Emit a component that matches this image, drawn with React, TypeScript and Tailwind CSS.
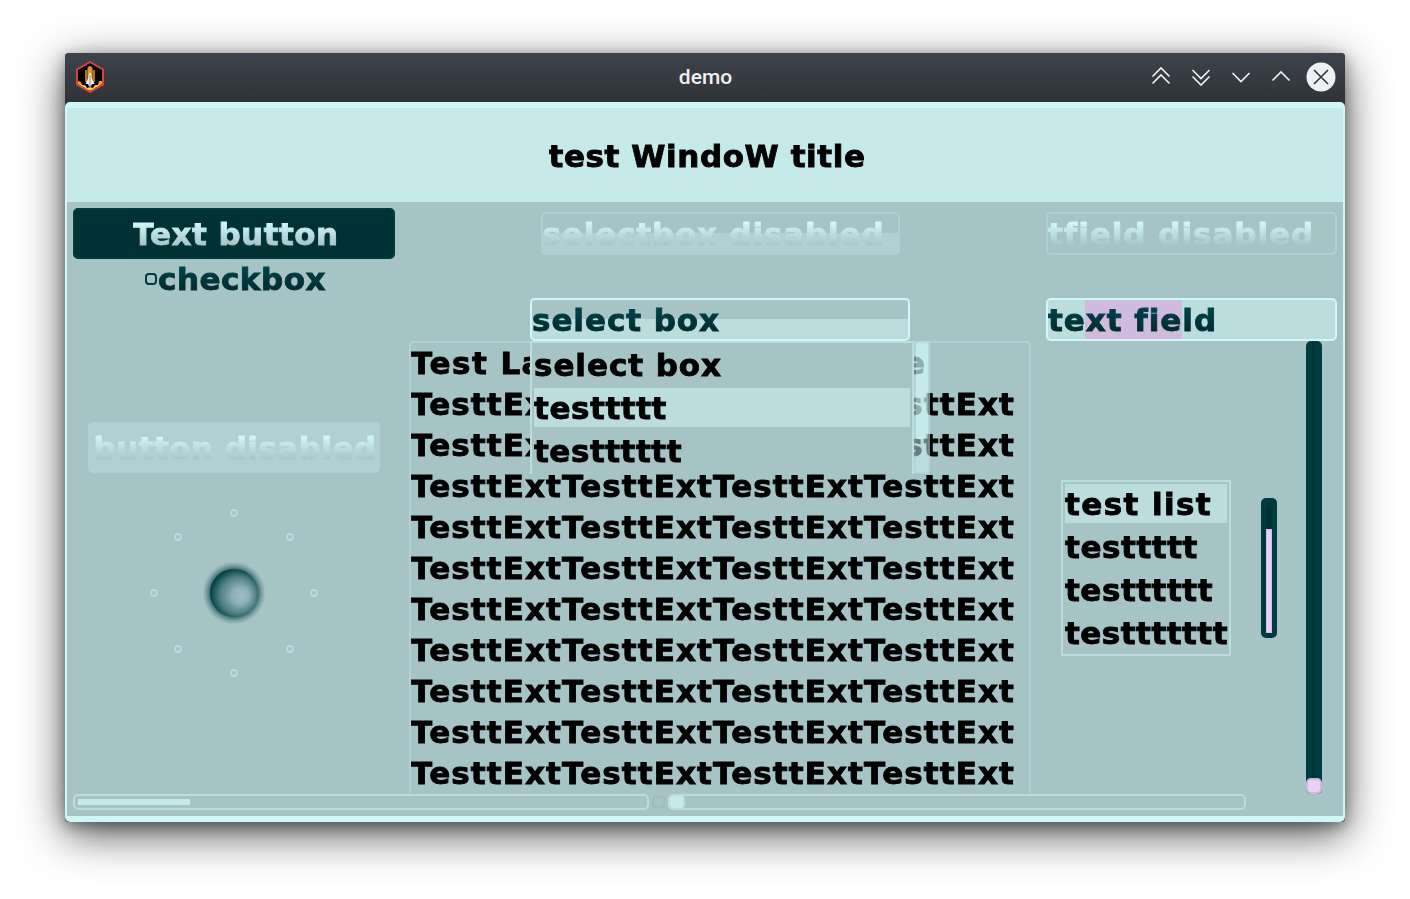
import { useLayoutEffect, useRef } from "react";
import type { ReactNode } from "react";

const tones = {
  black: "bg-linear-to-b from-black from-50% to-[#0b0014]",
  dark: "bg-linear-to-b from-[#004247] from-20% to-[#002b2f] to-80%",
  light: "bg-linear-to-b from-[#d0f7f9] from-20% to-[#a6c3c6] to-80%",
};

/** Gradient text that is tracked so that it fills a given width. */
function Label({ text, width, tone = "black" }: { text: string; width: number; tone?: keyof typeof tones }) {
  const ref = useRef<HTMLSpanElement>(null);
  useLayoutEffect(() => {
    const el = ref.current;
    if (!el) return;
    el.style.letterSpacing = "0px";
    const natural = el.getBoundingClientRect().width;
    el.style.letterSpacing = `${(width - natural) / text.length}px`;
  }, [text, width]);
  return (
    <span
      ref={ref}
      className={`inline-block shrink-0 whitespace-pre bg-clip-text text-[31px] leading-[39px] font-bold text-transparent [-webkit-text-stroke:0.9px_transparent] ${tones[tone]}`}
    >
      {text}
    </span>
  );
}

function Glyph({ children }: { children: ReactNode }) {
  return (
    <svg width="30" height="30" viewBox="0 0 30 30" fill="none" stroke="#eff0f1" strokeWidth="1.6">
      {children}
    </svg>
  );
}

function AppIcon() {
  return (
    <svg width="30" height="34" viewBox="0 0 30 34">
      <path d="M15 2 L28 9.5 V24.5 L15 32 L2 24.5 V9.5 Z" fill="#050303" />
      <path d="M3 21 L6 22 L7 25 L10 25 L12 28 L15 27 L18 28 L20 25 L23 25 L24 21 L27 21 V24 L15 31 L3 24Z" fill="#eea01f" />
      <path d="M5 24.500 l3 2 2 0 2 3 3-1 3 1 2-3 2 0 3-2" fill="none" stroke="#ffe14d" strokeWidth="1.2" />
      <path d="M12.500 8 Q15 4 17.500 8 V22 H12.500Z" fill="#e0922a" />
      <path d="M10 10 h2.500 v12 h-2.500z M17.500 10 h2.500 v12 h-2.500z" fill="#b5750f" />
      <path d="M15 12 Q16.500 14 16.700 18 L19.500 24 H17 L16 26.500 H14 L13 24 H10.500 L13.300 18 Q13.500 14 15 12Z" fill="#eceef2" />
      <path d="M15 15 V26" stroke="#6a7080" strokeWidth=".8" />
      <path d="M15 2 L28 9.500 V24.500 L15 32 L2 24.500 V9.500 Z" fill="none" stroke="#e04545" strokeWidth="1.9" />
    </svg>
  );
}

function TitleBar() {
  return (
    <div className="grid h-[49px] grid-cols-[1fr_auto_1fr] items-center bg-linear-to-b from-[#3e424c] to-[#2f3437] pr-[9px] pb-[2px] pl-[10px]">
      <AppIcon />
      <span className="font-['Roboto'] text-[21px] leading-6 font-medium text-[#eff0f1]">demo</span>
      <div className="flex justify-end gap-[10px]">
        <Glyph><path d="M6.500 14.500 L15 6 L23.500 14.500 M6.500 21.500 L15 13 L23.500 21.500" /></Glyph>
        <Glyph><path d="M6.500 8 L15 16.500 L23.500 8 M6.500 14.500 L15 23 L23.500 14.500" /></Glyph>
        <Glyph><path d="M6.500 11 L15 19.500 L23.500 11" /></Glyph>
        <Glyph><path d="M6.500 18.500 L15 10 L23.500 18.500" /></Glyph>
        <Glyph>
          <circle cx="15" cy="15" r="14.500" fill="#eff0f1" stroke="none" />
          <path d="M8 8 L22 22 M22 8 L8 22" stroke="#31363b" />
        </Glyph>
      </div>
    </div>
  );
}

function Knob() {
  const dots = [[80, 0], [136, 24], [160, 80], [136, 136], [80, 160], [24, 136], [0, 80], [24, 24]];
  return (
    <svg width="170" height="170" viewBox="-5 -5 170 170">
      <defs>
        <radialGradient id="halo">
          <stop offset="0.76" stopColor="#003f43" stopOpacity="0.62" />
          <stop offset="0.88" stopColor="#003f43" stopOpacity="0.25" />
          <stop offset="1" stopColor="#003f43" stopOpacity="0" />
        </radialGradient>
        <radialGradient id="dial" cx="0.55" cy="0.54" r="0.55" fx="0.68" fy="0.56">
          <stop offset="0" stopColor="#9fc0c3" />
          <stop offset="0.3" stopColor="#8fb1b4" />
          <stop offset="0.7" stopColor="#4d7e82" />
          <stop offset="1" stopColor="#003f43" />
        </radialGradient>
      </defs>
      {dots.map(([x, y]) => (
        <circle key={`${x}-${y}`} cx={x} cy={y} r="3" fill="none" stroke="#bbdddf" strokeWidth="1.9" />
      ))}
      <circle cx="80" cy="80" r="31.500" fill="url(#halo)" />
      <circle cx="80" cy="80" r="24" fill="url(#dial)" />
    </svg>
  );
}

function LeftColumn() {
  return (
    <div className="flex w-[322px] flex-col items-center">
      <div className="flex h-[51px] w-full items-center justify-center rounded-[5px] border-2 border-[#003b3f] bg-[#003135] pt-[2px] pl-[3px]">
        <Label text="Text button" width={206} tone="light" />
      </div>
      <div className="flex h-10 items-center pl-[3px]">
        <div className="size-3 rounded-[4px] border-2 border-[#003b3f]" />
        <div className="w-px" />
        <Label text="checkbox" width={168} tone="dark" />
      </div>
      <div className="mt-[123px] flex h-[51px] w-[292px] items-center justify-center rounded-[5px] bg-[#b1d0d3] pt-[2px] pl-[2px]">
        <Label text="button disabled" width={283} tone="light" />
      </div>
      <div className="mt-[35px]">
        <Knob />
      </div>
    </div>
  );
}

function Dropdown() {
  return (
    <div className="absolute top-[133px] left-[121px] flex h-[133px]">
      <div className="flex w-[384px] flex-col gap-1 border-x-2 border-t-2 border-[#bbddde] bg-[#a6c3c6] px-[2px] pt-[2px]">
        <div className="h-[39px] pt-px"><Label text="select box" width={188} /></div>
        <div className="h-[39px] bg-[#bbddde] pt-px"><Label text="testtttt" width={133} /></div>
        <div className="h-[39px] pt-px"><Label text="testttttt" width={148} /></div>
      </div>
      <div className="w-4 rounded-[4px] border-2 border-[#c0e0e2]/60 bg-[#cef7f8]/50 bg-clip-padding">
        <div className="h-[96px] rounded-[2px] bg-[#d5ffff]/38" />
      </div>
    </div>
  );
}

function MiddleColumn() {
  const line = "TesttExtTesttExtTesttExtTesttExt";
  return (
    <div className="relative ml-[14px] flex w-[622px] flex-col items-center pt-1">
      <div className="h-[43px] w-[359px] rounded-[5px] border-2 border-[#b1d0d3] bg-linear-to-b from-transparent from-[19px] to-[#b1d0d3] to-[19px] pt-px">
        <Label text="selectbox disabled" width={342} tone="light" />
      </div>
      <div className="mt-[43px] h-[43px] w-[380px] rounded-[5px] border-2 border-[#d0f7f8] bg-linear-to-b from-transparent from-[19px] to-[#bbddde] to-[19px] pt-px">
        <Label text="select box" width={188} tone="dark" />
      </div>
      <div className="flex min-h-0 w-full flex-1 flex-col overflow-hidden rounded-t-[4px] border-x-2 border-t-2 border-[#b1d0d3]">
        <div className="flex h-[41px] w-[513px] shrink-0 items-center justify-between">
          <Label text="Test La" width={133} />
          <Label text="e" width={20} />
        </div>
        {Array.from({ length: 10 }, (_, i) => (
          <div key={i} className="flex h-[41px] shrink-0 items-center">
            <Label text={line} width={604} />
          </div>
        ))}
      </div>
      <Dropdown />
    </div>
  );
}

function RightColumn() {
  return (
    <div className="ml-[15px] flex w-[291px] flex-col pt-1">
      <div className="h-[43px] rounded-[5px] border-2 border-[#b1d0d3] pt-px">
        <Label text="tfield disabled" width={265} tone="light" />
      </div>
      <div className="mt-[43px] h-[43px] rounded-[5px] border-2 border-[#d0f7f8] bg-[#bbddde]">
        <div className="h-[39px] bg-[linear-gradient(90deg,transparent_37px,#d0bbdf_37px,#d0bbdf_134px,transparent_134px)] pt-px">
          <Label text="text field" width={168} tone="dark" />
        </div>
      </div>
      <div className="flex min-h-0 flex-1">
        <div className="mt-[139px] ml-[15px] flex h-[176px] w-[170px] flex-col gap-1 border-2 border-[#bbddde] p-[2px]">
          <div className="h-[39px] bg-[#bbddde] pt-px"><Label text="test list" width={147} /></div>
          <div className="h-[39px] pt-px"><Label text="testtttt" width={133} /></div>
          <div className="h-[39px] pt-px"><Label text="testttttt" width={148} /></div>
          <div className="h-[39px] pt-px"><Label text="testtttttt" width={163} /></div>
        </div>
        <div className="mt-[157px] ml-[30px] flex h-[140px] w-4 flex-col items-center justify-end rounded-[5px] border-[5px] border-[#003b3f] bg-[#003135]">
          <div className="h-[104px] w-[6px] border border-[#d8bfe2] bg-[#e7d2f7]" />
        </div>
        <div className="ml-[29px] flex w-4 flex-col justify-end rounded-[5px] bg-linear-to-r from-[#003b3f] from-38% via-[#003135] via-38% to-[#003b3f] to-62%">
          <div className="size-4 rounded-[5px] border-2 border-[#cfb9dc] bg-[#e7d2f7]" />
        </div>
      </div>
    </div>
  );
}

function BottomBar() {
  return (
    <div className="flex h-4 items-center">
      <div className="h-4 w-[576px] rounded-[5px] border-2 border-[#bbddde] px-[3px] py-[3px]">
        <div className="h-[6px] w-[112px] bg-[#c6e9ea]" />
      </div>
      <div className="ml-[3px] h-3 w-[13px] rounded-[4px] border-2 border-[#9fbbbe]" />
      <div className="ml-[3px] h-4 w-[578px] rounded-[5px] border-2 border-[#bbddde]">
        <div className="h-3 w-[15px] rounded-[3px] border-r-2 border-[#bbddde] bg-[#c6e9ea]" />
      </div>
    </div>
  );
}

export default function App() {
  return (
    <div className="h-[899px] w-[1410px] overflow-hidden bg-white px-[65px] pt-[53px] font-['DejaVu_Sans',sans-serif]">
      <div className="h-[769px] overflow-hidden rounded-[4px] bg-[#2f3437] shadow-[0_12px_44px_rgba(0,0,0,0.68),0_4px_14px_rgba(0,0,0,0.35)]">
        <TitleBar />
        <div className="flex h-[720px] flex-col overflow-hidden rounded-[5px] border-x-2 border-y-[6px] border-[#d0f7f8] bg-[#a6c3c6]">
          <div className="flex h-[94px] items-center justify-center bg-[#c6e9ea] pt-[3px] pl-[4px]">
            <Label text="test WindoW title" width={317} />
          </div>
          <div className="flex min-h-0 flex-1 flex-col p-[6px]">
            <div className="flex min-h-0 flex-1">
              <LeftColumn />
              <MiddleColumn />
              <RightColumn />
            </div>
            <BottomBar />
          </div>
        </div>
      </div>
    </div>
  );
}
